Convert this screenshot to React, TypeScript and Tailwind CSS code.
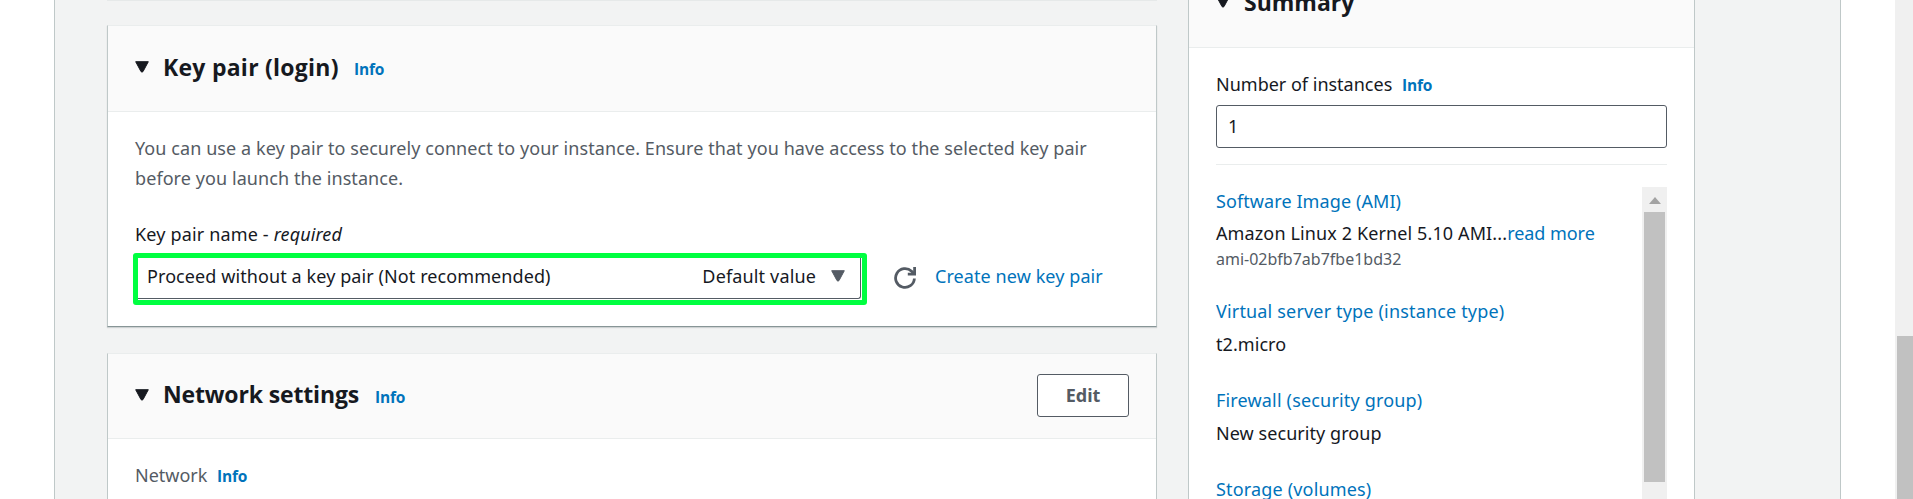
import type { ReactNode } from "react";

const Caret = ({ className = "" }: { className?: string }) => (
  <svg className={`shrink-0 ${className}`} width="14" height="12" viewBox="0 0 14 12" fill="currentColor">
    <path d="M0.7 0.7h12.6L8 10.6q-1 1-2 0z" stroke="currentColor" strokeWidth="1" strokeLinejoin="round" />
  </svg>
);

const Info = () => (
  <a className="block font-['Open_Sans',sans-serif] text-[15.5px] leading-[20px] font-bold tracking-[-0.2px] text-[#0073bb]">Info</a>
);

const Heading = ({ children }: { children: ReactNode }) => (
  <h2 className="font-['Open_Sans',sans-serif] text-[23px] leading-[30px] font-bold text-[#16191f]">{children}</h2>
);

function SummaryItem({ label, children }: { label: string; children?: ReactNode }) {
  return (
    <div className="h-[89px]">
      <a className="block tracking-[0.17px] text-[#0073bb]">{label}</a>
      <div className="mt-[3px] tracking-[0.06px]">{children}</div>
    </div>
  );
}

export default function App() {
  return (
    <div className="flex h-[499px] w-[1913px] overflow-hidden bg-white font-['Noto_Sans',sans-serif] text-[18px] leading-[30px] whitespace-nowrap text-[#16191f]">
      <div className="w-[54px] shrink-0" />
      <main className="flex w-[1787px] shrink-0 border-x border-[#bfc8c8] bg-[#f2f3f3] pl-[52px]">
        <div className="w-[1050px] shrink-0">
          <div className="h-px bg-[#e6e9e9]" />
          <section className="mt-[24px] h-[302px] border border-t-[#eaeded] border-r-[#bfc8c8] border-b-[#879596] border-l-[#bfc8c8] bg-white shadow-[0_1px_1px_rgba(0,28,36,0.15)]">
            <header className="flex h-[86px] items-start border-b border-[#eaeded] bg-[#fafafa] pt-[26px] pl-[27px]">
              <Caret className="mt-[9px]" />
              <div className="ml-[14px] w-[191px] tracking-[0.25px]"><Heading>Key pair (login)</Heading></div>
              <div className="mt-[7px]"><Info /></div>
            </header>
            <div className="px-[27px] pt-[21px]">
              <p className="tracking-[0.08px] text-[#545b64]">
                You can use a key pair to securely connect to your instance. Ensure that you have access to the selected key pair
                <br />
                before you launch the instance.
              </p>
              <p className="mt-[26px] tracking-[0.16px]">
                Key pair name - <i className="tracking-[0.1px]">required</i>
              </p>
              <div className="mt-[4px] -ml-[2px] flex items-center">
                <div className="flex h-[52px] w-[734px] rounded-[3px] border-[5px] border-[#00ff40] pr-px pb-px">
                  <div className="flex w-full items-center rounded-br-[3px] border-r border-b border-[#545b64] pr-[15px] pb-[4px] pl-[9px]">
                    <span className="tracking-[0.09px]">Proceed without a key pair (Not recommended)</span>
                    <span className="mr-[15px] ml-auto tracking-[0.15px]">Default value</span>
                    <Caret className="h-[14px] w-[14px] text-[#545b64]" />
                  </div>
                </div>
                <svg className="mb-[3px] ml-[27px]" width="22" height="22" viewBox="0 0 22 22" fill="none" stroke="#545b64" strokeWidth="2.8">
                  <path d="M20.4 11.5A9.4 9.4 0 1 1 17.6 4.3L20 6.8" />
                  <path d="M20.6 0V7.2H13.8" />
                </svg>
                <a className="mb-[6px] ml-[19px] tracking-[0.08px] text-[#0073bb]">Create new key pair</a>
              </div>
            </div>
          </section>
          <section className="mt-[26px] h-[200px] border border-t-[#eaeded] border-r-[#bfc8c8] border-b-[#879596] border-l-[#bfc8c8] bg-white">
            <header className="flex h-[85px] items-start border-b border-[#eaeded] bg-[#fafafa] pt-[25px] pl-[27px]">
              <Caret className="mt-[10px]" />
              <div className="ml-[14px] w-[212px] tracking-[-0.15px]"><Heading>Network settings</Heading></div>
              <div className="mt-[8px]"><Info /></div>
              <button className="-mt-[5px] mr-[27px] ml-auto h-[43px] w-[92px] rounded-[3px] border border-[#545b64] bg-white pb-px font-bold text-[#545b64]">Edit</button>
            </header>
            <div className="flex items-center px-[27px] pt-[21px]">
              <span className="w-[82px] text-[#545b64]">Network</span>
              <div className="mt-[2px]"><Info /></div>
            </div>
          </section>
        </div>
        <aside className="ml-[31px] w-[507px] shrink-0 border-x border-[#bfc8c8] bg-white">
          <header className="flex h-[48px] items-start border-b border-[#eaeded] bg-[#fafafa] pl-[27px]">
            <Caret className="-mt-[4px]" />
            <div className="-mt-[13px] ml-[14px]"><Heading>Summary</Heading></div>
          </header>
          <div className="pt-[21px] pr-[27px] pl-[27px]">
            <div className="flex h-[30px] items-center">
              <span className="w-[186px]">Number of instances</span>
              <div className="mt-[2px]"><Info /></div>
            </div>
            <div className="mt-[6px] flex h-[43px] items-center rounded-[3px] border border-[#545b64] pb-px pl-[11px]">1</div>
            <div className="mt-[16px] h-px bg-[#eaeded]" />
            <div className="mt-[22px] flex">
              <div className="flex-1">
                <div className="-mt-px h-[110px]">
                  <a className="block tracking-[0.09px] text-[#0073bb]">Software Image (AMI)</a>
                  <div className="mt-[2px] tracking-[0.12px]">
                    Amazon Linux 2 Kernel 5.10 AMI...<a className="tracking-[-0.05px] text-[#0073bb]">read more</a>
                  </div>
                  <div className="-mt-[4px] text-[16px] text-[#545b64]">ami-02bfb7ab7fbe1bd32</div>
                </div>
                <SummaryItem label="Virtual server type (instance type)">t2.micro</SummaryItem>
                <SummaryItem label="Firewall (security group)">New security group</SummaryItem>
                <SummaryItem label="Storage (volumes)" />
              </div>
              <div className="flex h-[400px] w-[25px] flex-col items-center bg-[#f0f0f0]">
                <svg className="mt-[10px]" width="12" height="7" viewBox="0 0 12 7" fill="#a3a3a3"><path d="M0 7 6 0l6 7z" /></svg>
                <div className="mt-[8px] h-[270px] w-[21px] bg-[#c1c1c1]" />
              </div>
            </div>
          </div>
        </aside>
      </main>
      <div className="w-[54px] shrink-0" />
      <div className="w-[18px] shrink-0 bg-[#f0f0f0] pt-[336px] pl-[2px]">
        <div className="h-full bg-[#c1c1c1]" />
      </div>
    </div>
  );
}
